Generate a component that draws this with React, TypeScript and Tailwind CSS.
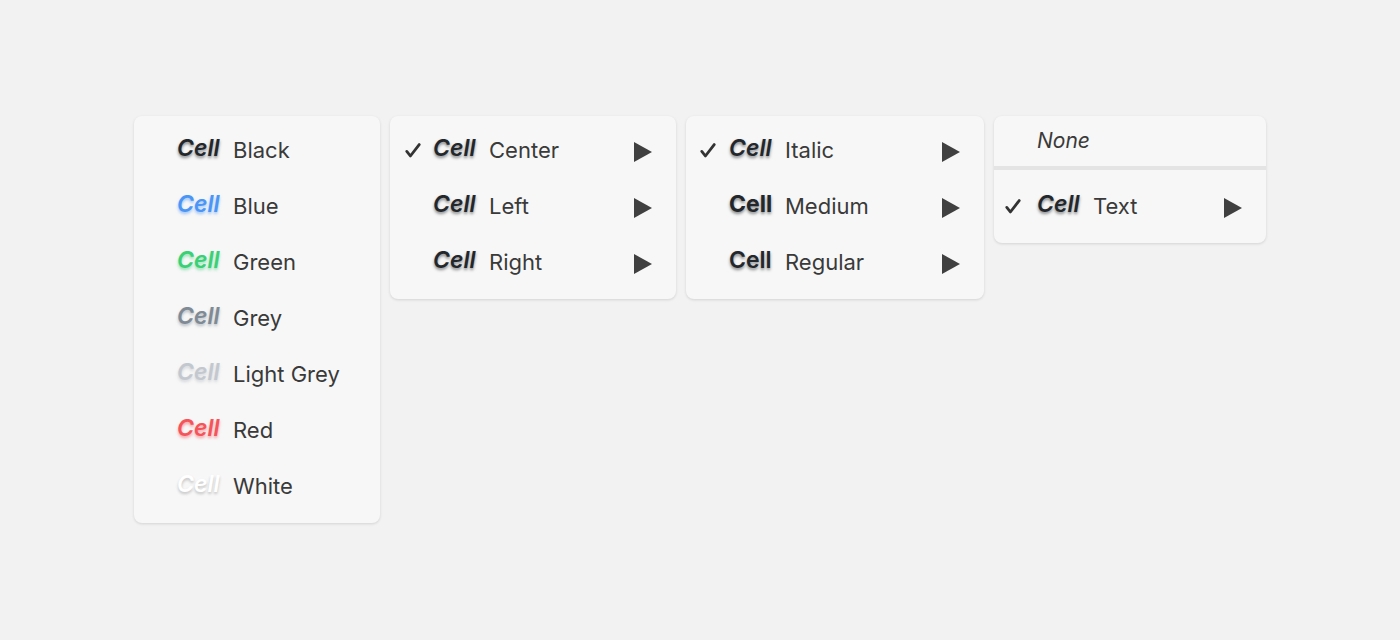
import React from "react";

type Row = {
  cell: string;
  cellClass: string;
  label: string;
  checked?: boolean;
  arrow?: boolean;
};

const colorRows: Row[] = [
  { cell: "Cell", cellClass: "text-[#23272b] italic font-semibold [text-shadow:0_2px_3px_rgba(20,24,28,0.5)]", label: "Black" },
  { cell: "Cell", cellClass: "text-[#4a95f5] italic font-semibold [text-shadow:0_2px_3px_rgba(74,149,245,0.55)]", label: "Blue" },
  { cell: "Cell", cellClass: "text-[#3bcf76] italic font-semibold [text-shadow:0_2px_3px_rgba(59,207,118,0.55)]", label: "Green" },
  { cell: "Cell", cellClass: "text-[#7f8a95] italic font-semibold [text-shadow:0_2px_3px_rgba(127,138,149,0.55)]", label: "Grey" },
  { cell: "Cell", cellClass: "text-[#c3c8cf] italic font-semibold [text-shadow:0_2px_3px_rgba(180,186,194,0.55)]", label: "Light Grey" },
  { cell: "Cell", cellClass: "text-[#f4545a] italic font-semibold [text-shadow:0_2px_3px_rgba(244,84,90,0.55)]", label: "Red" },
  { cell: "Cell", cellClass: "text-white italic font-semibold [text-shadow:0_2px_3px_rgba(0,0,0,0.22)]", label: "White" },
];

const dark = "text-[#23272b] [text-shadow:0_2px_3px_rgba(20,24,28,0.5)]";

const alignRows: Row[] = [
  { cell: "Cell", cellClass: `${dark} italic font-semibold`, label: "Center", checked: true, arrow: true },
  { cell: "Cell", cellClass: `${dark} italic font-semibold`, label: "Left", arrow: true },
  { cell: "Cell", cellClass: `${dark} italic font-semibold`, label: "Right", arrow: true },
];

const weightRows: Row[] = [
  { cell: "Cell", cellClass: `${dark} italic font-semibold`, label: "Italic", checked: true, arrow: true },
  { cell: "Cell", cellClass: `${dark} font-bold`, label: "Medium", arrow: true },
  { cell: "Cell", cellClass: `${dark} font-semibold`, label: "Regular", arrow: true },
];

function Check() {
  return (
    <svg width="16" height="15" viewBox="0 0 16 15" className="text-[#333]">
      <path d="M1.8 8.4 L5.4 13 L14.2 1.6" fill="none" stroke="currentColor" strokeWidth="2.8" strokeLinecap="round" strokeLinejoin="round" />
    </svg>
  );
}

function Arrow() {
  return (
    <svg width="18" height="20" viewBox="0 0 18 20" className="text-[#404040]">
      <polygon points="0,0 18,10 0,20" fill="currentColor" />
    </svg>
  );
}

function MenuRow({ row, checkPad }: { row: Row; checkPad: string }) {
  return (
    <div className="flex h-14 items-center">
      <div className={`w-[43px] shrink-0 flex items-center ${checkPad}`}>
        {row.checked && <Check />}
      </div>
      <div className={`w-[56px] shrink-0 text-[23px] leading-none -mt-1 ${row.cellClass}`}>{row.cell}</div>
      <div className="text-[22px] text-[#3a3a3a] leading-none">{row.label}</div>
      {row.arrow && (
        <div className="ml-auto pr-[24px] pt-[3px] flex items-center">
          <Arrow />
        </div>
      )}
    </div>
  );
}

const panel = "bg-[#f7f7f7] rounded-lg shadow-[0_1px_3px_rgba(0,0,0,0.13)]";

export default function App() {
  return (
    <div
      className="h-[640px] w-[1400px] bg-[#f2f2f2] flex items-start gap-[10px] pl-[134px] pt-[116px]"
      style={{ fontFamily: "Inter, 'Noto Sans', sans-serif" }}
    >
      <div className={`${panel} w-[246px] pt-1.5 pb-[9px]`}>
        {colorRows.map((r) => (
          <MenuRow key={r.label} row={r} checkPad="pl-[15px]" />
        ))}
      </div>
      <div className={`${panel} w-[286px] pt-1.5 pb-[9px]`}>
        {alignRows.map((r) => (
          <MenuRow key={r.label} row={r} checkPad="pl-[15px]" />
        ))}
      </div>
      <div className={`${panel} w-[298px] pt-1.5 pb-[9px]`}>
        {weightRows.map((r) => (
          <MenuRow key={r.label} row={r} checkPad="pl-[14px]" />
        ))}
      </div>
      <div className={`${panel} w-[272px] overflow-hidden`}>
        <div className="h-[50px] flex items-center pl-[43px] text-[21px] italic text-[#3a3a3a]">None</div>
        <div className="h-1 bg-[#e4e4e4]" />
        <div className="pt-2 pb-[9px]">
          <MenuRow
            row={{ cell: "Cell", cellClass: `${dark} italic font-semibold`, label: "Text", checked: true, arrow: true }}
            checkPad="pl-[11px]"
          />
        </div>
      </div>
    </div>
  );
}
